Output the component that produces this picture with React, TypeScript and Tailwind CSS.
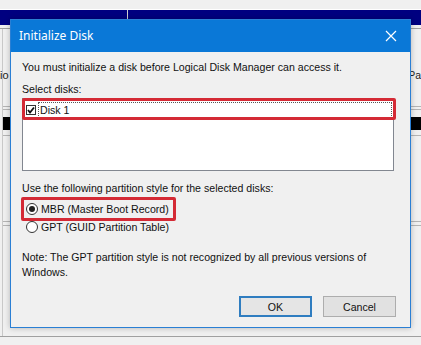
import React from "react";

const ui = { fontFamily: '"Liberation Sans", Arial, sans-serif' };
const title = { fontFamily: '"Noto Sans", "Open Sans", sans-serif' };

function Radio({ checked }: { checked?: boolean }) {
  return (
    <span className="flex h-[12px] w-[12px] items-center justify-center rounded-full border border-[#333] bg-white">
      {checked && <span className="h-[6px] w-[6px] rounded-full bg-[#222]" />}
    </span>
  );
}

// strip of the window behind the dialog (only its edges show)
function Strip({ label, left }: { label: string; left?: boolean }) {
  return (
    <div className={left ? "ml-[2px] flex h-[307px] w-[10px] flex-col border-l border-[#c8c8c8]" : "flex h-[307px] w-[11px] flex-col"}>
      <div className={left ? "-ml-[3px] mt-[39px] text-[11px] leading-[14px] text-[#222]" : "-ml-[3px] mt-[39px] text-right text-[10.5px] leading-[14px] text-[#222]"}>
        {label}
      </div>
      <div className="mt-[24px] h-px bg-[#b4b4b4]" />
      <div className="mt-[2px] h-px bg-[#b4b4b4]" />
      <div className="mt-[7px] h-[13px] bg-black" />
      <div className="mt-[5px] h-px bg-[#b4b4b4]" />
      <div className="mt-[85px] h-px bg-[#b4b4b4]" />
      <div className="mt-[3px] h-px bg-[#b4b4b4]" />
    </div>
  );
}

export default function App() {
  return (
    <div className="relative h-[345px] w-[421px] overflow-hidden bg-[#f0f0f0]" style={ui}>
      {/* window behind the dialog */}
      <div className="h-[9px] bg-[#f0f0f0]" />
      <div className="h-px bg-white" />
      <div className="flex h-[15px] bg-[#000080]">
        <div className="w-[127px]" />
        <div className="h-[10px] w-px bg-[#d0d0d0]" />
      </div>
      <div className="mt-[3px] h-px bg-[#a0a0a0]" />
      <div className="flex justify-between">
        <Strip label="io" left />
        <Strip label="Pa" />
      </div>
      <div className="h-px bg-[#a0a0a0]" />

      {/* dialog */}
      <div className="absolute left-[10px] top-[19px] flex h-[309px] w-[401px] flex-col border border-[#2a7fd4] bg-[#f0f0f0] shadow-[0_0_6px_rgba(0,0,0,0.25)]">
        <div className="flex h-[32px] items-center justify-between bg-[#0a78d7] pl-[8px] pr-[12px] text-white">
          <span className="text-[12px]" style={title}>Initialize Disk</span>
          <svg width="12" height="12" viewBox="0 0 12 12" className="mr-px">
            <path d="M1 1 L11 11 M11 1 L1 11" stroke="white" strokeWidth="1.2" />
          </svg>
        </div>

        <div className="flex flex-1 flex-col pl-[11px] pr-[14px] text-[10.6px] leading-[14px] text-[#111]">
          <p className="mt-[8px]">You must initialize a disk before Logical Disk Manager can access it.</p>
          <p className="mt-[8px]">Select disks:</p>

          <div className="relative mt-[2px] h-[73px] w-[372px] border border-[#828790] bg-white">
            <div className="mt-[2px] flex h-[17px] items-center pl-[3px]">
              <span className="flex h-[10px] w-[10px] items-center justify-center border border-[#333] bg-white">
                <svg width="8" height="8" viewBox="0 0 8 8">
                  <path d="M1 4 L3 6.5 L7 1.5" stroke="#111" strokeWidth="1.8" fill="none" />
                </svg>
              </span>
              <span className="ml-[2px] mr-[1px] flex h-[16px] flex-1 items-center border border-dotted border-[#555] pl-[1px]">
                Disk 1
              </span>
            </div>
            <div className="absolute -left-px -top-px h-[22px] w-[374px] rounded-[2px] border-[3px] border-[#d42a35]" />
          </div>

          <p className="mt-[10px]">Use the following partition style for the selected disks:</p>

          <div className="relative mt-[5px] flex h-[18px] items-center gap-[3px] pl-[4px]">
            <Radio checked />
            <span>MBR (Master Boot Record)</span>
            <div className="absolute -left-px -top-[3px] h-[24px] w-[155px] rounded-[2px] border-[3px] border-[#d42a35]" />
          </div>
          <div className="flex h-[18px] items-center gap-[3px] pl-[4px]">
            <Radio />
            <span>GPT (GUID Partition Table)</span>
          </div>

          <p className="mt-[14px] leading-[15px]">
            Note: The GPT partition style is not recognized by all previous versions of
            <br />
            Windows.
          </p>

          <div className="mt-[16px] flex justify-end gap-[11px]">
            <button className="h-[21px] w-[73px] border-2 border-[#2f7dc0] bg-[#e5e5e5] text-[10.6px]">OK</button>
            <button className="h-[21px] w-[73px] border border-[#adadad] bg-[#e1e1e1] text-[10.6px]">Cancel</button>
          </div>
        </div>
      </div>
    </div>
  );
}
